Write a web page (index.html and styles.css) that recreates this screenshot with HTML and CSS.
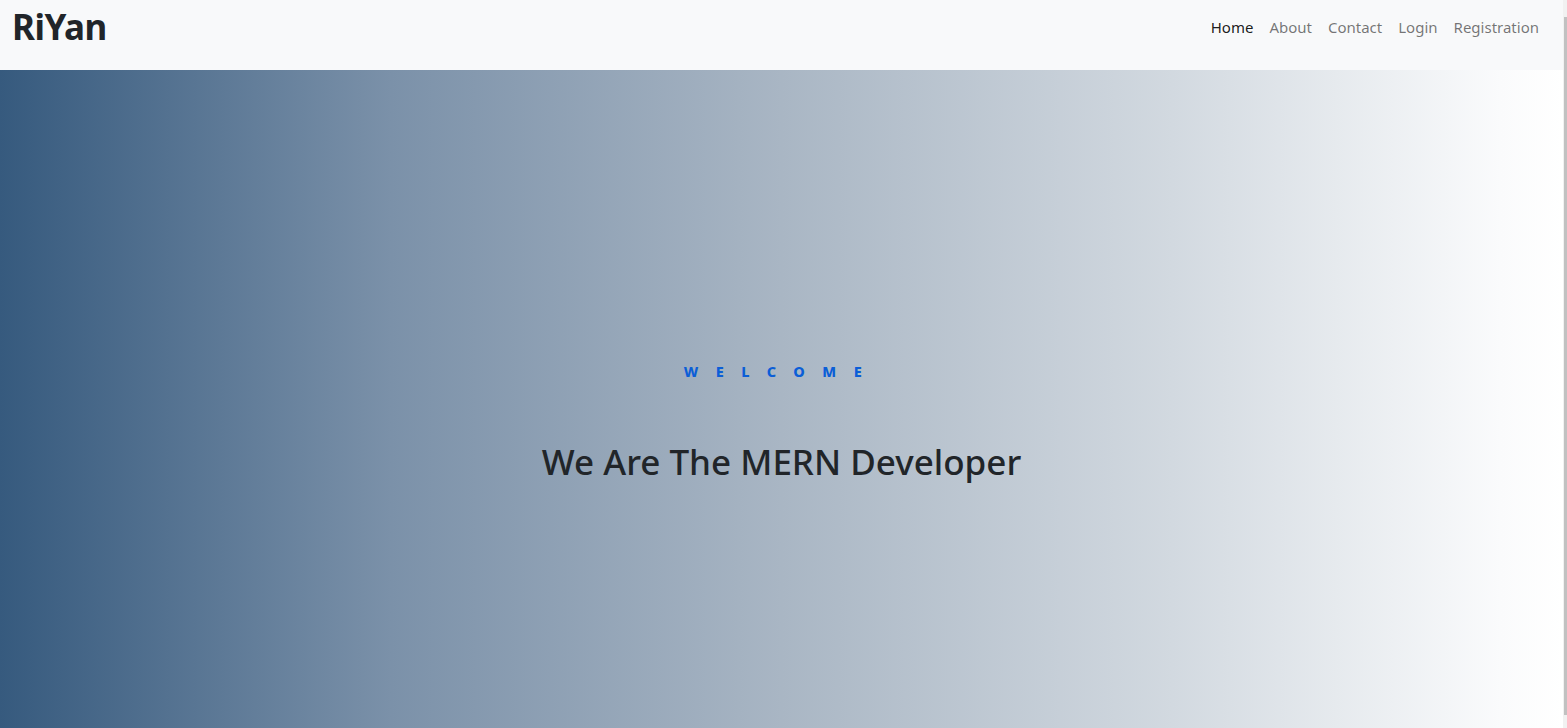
FILE: index.html
```html
<!DOCTYPE html>
<html lang="en">
<head>
<meta charset="utf-8">
<title>RiYan</title>
<link rel="stylesheet" href="styles.css">
</head>
<body>
<div class="page">
  <nav class="navbar">
    <a class="brand" href="#">RiYan</a>
    <ul class="nav">
      <li><a class="nav-link active" href="#">Home</a></li>
      <li><a class="nav-link" href="#">About</a></li>
      <li><a class="nav-link" href="#">Contact</a></li>
      <li><a class="nav-link" href="#">Login</a></li>
      <li><a class="nav-link" href="#">Registration</a></li>
    </ul>
  </nav>
  <main class="hero">
    <p class="welcome">WELCOME</p>
    <h1 class="title">We Are The MERN Developer</h1>
  </main>
</div>
<div class="scrollbar"><div class="thumb"></div></div>
</body>
</html>
```

FILE: styles.css
```css
* { box-sizing: border-box; }
html, body { margin: 0; padding: 0; height: 100%; }
body {
  display: flex;
  font-family: "Noto Sans", "Open Sans", sans-serif;
  color: #212529;
  background: #fff;
  overflow: hidden;
}
.page {
  flex: 1;
  display: flex;
  flex-direction: column;
  height: 100vh;
}
.navbar {
  height: 70px;
  flex: 0 0 70px;
  background: #f8f9fa;
  display: flex;
  align-items: center;
  justify-content: space-between;
  padding: 0 16px 17px 12px;
}
.brand {
  font-size: 35px;
  font-weight: 700;
  color: #212529;
  text-decoration: none;
  letter-spacing: -0.5px;
  line-height: 1;
  margin-top: -1px;
}
.nav {
  list-style: none;
  display: flex;
  margin: 0;
  padding: 0;
}
.nav-link {
  display: block;
  padding: 8px 8px;
  font-size: 15px;
  color: rgba(0,0,0,0.55);
  text-decoration: none;
  letter-spacing: 0;
}
.nav-link.active { color: rgba(0,0,0,0.9); }
.hero {
  flex: 1;
  display: flex;
  flex-direction: column;
  align-items: center;
  justify-content: center;
  padding-top: 49px;
  background: linear-gradient(to right, #365a7e 0%, #7b91a9 25%, #a9b6c4 50%, #d2d9e0 75%, #fafbfc 96%, #ffffff 100%);
}
.welcome {
  margin: 0 0 63px 0;
  font-size: 14.5px;
  font-weight: 800;
  color: #0b5ed7;
  letter-spacing: 17.5px;
  line-height: 1;
}
.title {
  margin: 0;
  font-size: 35px;
  font-weight: 500;
  line-height: 1.2;
  color: #212529;
}
.scrollbar {
  width: 4px;
  flex: 0 0 4px;
  height: 100vh;
  background: #f1f1f1;
  padding: 17px 0 13px 1px;
  display: flex;
}
.thumb {
  flex: 1;
  background: #c1c1c1;
}
```
